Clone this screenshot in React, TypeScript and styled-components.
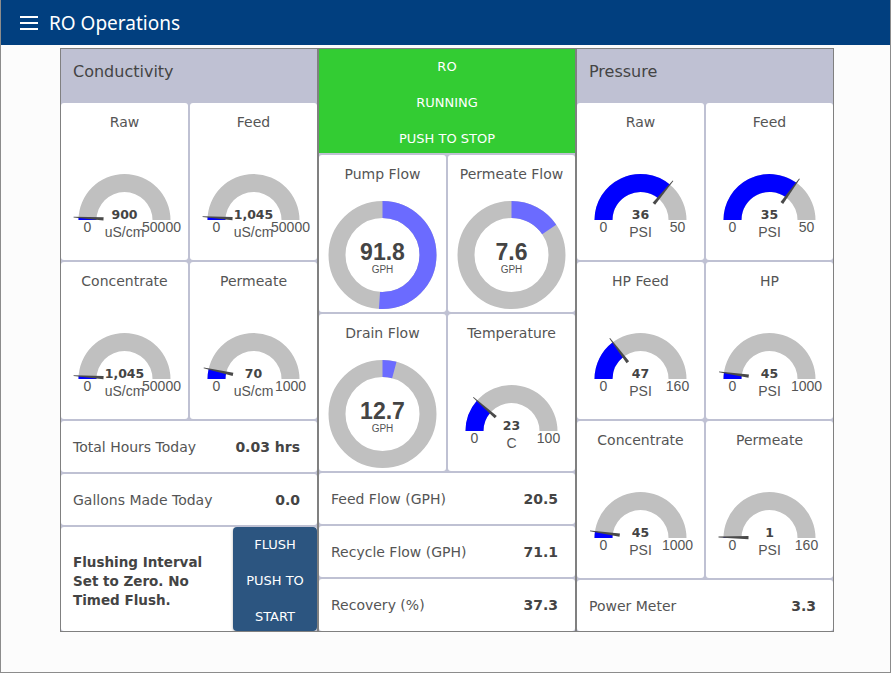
import styled, { createGlobalStyle } from 'styled-components';

const GlobalStyle = createGlobalStyle`
  html, body {
    margin: 0;
    padding: 0;
    background: #ffffff;
  }
  body {
    font-family: "DejaVu Sans", Verdana, sans-serif;
  }
  * {
    box-sizing: border-box;
  }
`;

interface GaugeData {
  title: string;
  value: number;
  display: string;
  unit: string;
  min: number;
  max: number;
}

interface DonutData {
  title: string;
  value: string;
  fraction: number;
}

interface StatData {
  label: string;
  value: string;
}

const conductivity: GaugeData[] = [
  { title: 'Raw', value: 900, display: '900', unit: 'uS/cm', min: 0, max: 50000 },
  { title: 'Feed', value: 1045, display: '1,045', unit: 'uS/cm', min: 0, max: 50000 },
  { title: 'Concentrate', value: 1045, display: '1,045', unit: 'uS/cm', min: 0, max: 50000 },
  { title: 'Permeate', value: 70, display: '70', unit: 'uS/cm', min: 0, max: 1000 },
];

const pressure: GaugeData[] = [
  { title: 'Raw', value: 36, display: '36', unit: 'PSI', min: 0, max: 50 },
  { title: 'Feed', value: 35, display: '35', unit: 'PSI', min: 0, max: 50 },
  { title: 'HP Feed', value: 47, display: '47', unit: 'PSI', min: 0, max: 160 },
  { title: 'HP', value: 45, display: '45', unit: 'PSI', min: 0, max: 1000 },
  { title: 'Concentrate', value: 45, display: '45', unit: 'PSI', min: 0, max: 1000 },
  { title: 'Permeate', value: 1, display: '1', unit: 'PSI', min: 0, max: 160 },
];

const temperature: GaugeData = {
  title: 'Temperature',
  value: 23,
  display: '23',
  unit: 'C',
  min: 0,
  max: 100,
};

const flows: DonutData[] = [
  { title: 'Pump Flow', value: '91.8', fraction: 0.51 },
  { title: 'Permeate Flow', value: '7.6', fraction: 0.155 },
  { title: 'Drain Flow', value: '12.7', fraction: 0.042 },
];

const leftStats: StatData[] = [
  { label: 'Total Hours Today', value: '0.03 hrs' },
  { label: 'Gallons Made Today', value: '0.0' },
];

const middleStats: StatData[] = [
  { label: 'Feed Flow (GPH)', value: '20.5' },
  { label: 'Recycle Flow (GPH)', value: '71.1' },
  { label: 'Recovery (%)', value: '37.3' },
];

const CX = 63.5;
const GAUGE_CY = 88;
const DONUT_CY = 71;
const R_OUT = 46;
const R_IN = 28;

const point = (angle: number, radius: number, cy: number) =>
  `${(CX + radius * Math.cos(angle)).toFixed(2)} ${(cy - radius * Math.sin(angle)).toFixed(2)}`;

const arcPath = (fraction: number) => {
  const end = Math.PI - Math.PI * fraction;
  return [
    `M ${point(Math.PI, R_OUT, GAUGE_CY)}`,
    `A ${R_OUT} ${R_OUT} 0 0 1 ${point(end, R_OUT, GAUGE_CY)}`,
    `L ${point(end, R_IN, GAUGE_CY)}`,
    `A ${R_IN} ${R_IN} 0 0 0 ${point(Math.PI, R_IN, GAUGE_CY)}`,
    'Z',
  ].join(' ');
};

const needlePoints = (fraction: number) => {
  const a = Math.PI - Math.PI * fraction;
  const dx = Math.cos(a);
  const dy = -Math.sin(a);
  const nx = Math.sin(a);
  const ny = Math.cos(a);
  const at = (r: number, w: number) =>
    `${(CX + dx * r + nx * w).toFixed(2)},${(GAUGE_CY + dy * r + ny * w).toFixed(2)}`;
  return [at(21, 1.6), at(51, 0.4), at(51, -0.4), at(21, -1.6)].join(' ');
};

const Gauge = ({ title, value, display, unit, min, max }: GaugeData) => {
  const fraction = Math.max(0, Math.min(1, (value - min) / (max - min)));

  return (
    <Cell>
      <CellTitle>{title}</CellTitle>
      <svg width={127} height={128} viewBox="0 0 127 128">
        <path d={arcPath(1)} fill="#c0c0c0" />
        <path d={arcPath(fraction)} fill="#0000ff" />
        <polygon points={needlePoints(fraction)} fill="#4a4a4a" />
        <GaugeValue x={CX} y={GAUGE_CY - 1}>
          {display}
        </GaugeValue>
        <GaugeUnit x={CX} y={GAUGE_CY + 16.5}>
          {unit}
        </GaugeUnit>
        <GaugeLabel x={CX - 37} y={GAUGE_CY + 12}>
          {min}
        </GaugeLabel>
        <GaugeLabel x={CX + 37} y={GAUGE_CY + 12}>
          {max}
        </GaugeLabel>
      </svg>
    </Cell>
  );
};

const Donut = ({ title, value, fraction }: DonutData) => {
  const r = 45.5;
  const circumference = 2 * Math.PI * r;

  return (
    <Cell>
      <CellTitle>{title}</CellTitle>
      <svg width={127} height={128} viewBox="0 0 127 128">
        <circle cx={CX} cy={DONUT_CY} r={r} fill="none" stroke="#c0c0c0" strokeWidth={17} />
        <circle
          cx={CX}
          cy={DONUT_CY}
          r={r}
          fill="none"
          stroke="#6b6bff"
          strokeWidth={17}
          strokeDasharray={`${circumference * fraction} ${circumference}`}
          transform={`rotate(-90 ${CX} ${DONUT_CY})`}
        />
        <DonutValue x={CX} y={DONUT_CY + 5}>
          {value}
        </DonutValue>
        <DonutUnit x={CX} y={DONUT_CY + 18}>
          GPH
        </DonutUnit>
      </svg>
    </Cell>
  );
};

const Stat = ({ label, value }: StatData) => (
  <StatRow>
    <StatLabel>{label}</StatLabel>
    <StatValue>{value}</StatValue>
  </StatRow>
);

const App = () => (
  <>
    <GlobalStyle />
    <Frame>
      <Header>
        <svg width={18} height={14} viewBox="0 0 18 14">
          <rect x={0} y={0} width={18} height={2} fill="#fff" />
          <rect x={0} y={6} width={18} height={2} fill="#fff" />
          <rect x={0} y={12} width={18} height={2} fill="#fff" />
        </svg>
        <Title>RO Operations</Title>
      </Header>
      <Main>
        <Column>
          <PanelHeader>Conductivity</PanelHeader>
          <CellGrid>
            {conductivity.map((g) => (
              <Gauge key={g.title} {...g} />
            ))}
          </CellGrid>
          {leftStats.map((s) => (
            <Stat key={s.label} {...s} />
          ))}
          <FlushRow>
            <FlushText>Flushing Interval Set to Zero. No Timed Flush.</FlushText>
            <FlushButton type="button">
              <span>FLUSH</span>
              <span>PUSH TO</span>
              <span>START</span>
            </FlushButton>
          </FlushRow>
        </Column>

        <Column>
          <RunButton type="button">
            <span>RO</span>
            <span>RUNNING</span>
            <span>PUSH TO STOP</span>
          </RunButton>
          <CellGrid>
            {flows.map((d) => (
              <Donut key={d.title} {...d} />
            ))}
            <Gauge {...temperature} />
          </CellGrid>
          {middleStats.map((s) => (
            <Stat key={s.label} {...s} />
          ))}
        </Column>

        <Column>
          <PanelHeader>Pressure</PanelHeader>
          <CellGrid>
            {pressure.map((g) => (
              <Gauge key={g.title} {...g} />
            ))}
          </CellGrid>
          <Stat label="Power Meter" value="3.3" />
        </Column>
      </Main>
    </Frame>
  </>
);

export default App;

const Frame = styled.div`
  width: 891px;
  height: 673px;
  overflow: hidden;

  background: #fcfcfc;
  border: 1px solid #8c8c8c;
  border-top: none;
`;

const Header = styled.header`
  display: flex;
  gap: 11px;
  align-items: center;

  height: 45px;
  padding-left: 19px;

  background: #013f7f;
`;

const Title = styled.h1`
  margin: 0;

  font-family: 'Noto Sans', 'Open Sans', sans-serif;
  font-size: 19px;
  font-weight: 400;
  color: #ffffff;
`;

const Main = styled.main`
  display: grid;
  grid-template-columns: repeat(3, 258px);

  padding: 3px 0 0 59px;
`;

const Column = styled.section`
  display: flex;
  flex-direction: column;
  gap: 2px;

  height: 584px;
  overflow: hidden;

  background: #bfc1d3;
  border: 1px solid #808080;

  & > :last-child {
    flex: 1;
    min-height: 0;
  }
`;

const PanelHeader = styled.h2`
  flex: 0 0 52px;

  margin: 0;
  padding: 12px 12px 0;

  font-size: 16px;
  font-weight: 400;
  line-height: 22px;
  color: #444444;
`;

const CellGrid = styled.div`
  display: grid;
  grid-template-columns: 1fr 1fr;
  grid-auto-rows: 157px;
  gap: 2px;
`;

const Cell = styled.div`
  display: flex;
  flex-direction: column;
  align-items: center;

  overflow: hidden;

  background: #ffffff;
  border-radius: 3px;
`;

const CellTitle = styled.div`
  padding-top: 9px;

  font-size: 14px;
  line-height: 20px;
  color: #555555;
  white-space: nowrap;
`;

const GaugeValue = styled.text`
  font-family: 'DejaVu Sans', sans-serif;
  font-size: 12.5px;
  font-weight: 700;
  fill: #444444;
  text-anchor: middle;
`;

const GaugeUnit = styled.text`
  font-family: 'Liberation Sans', Arial, sans-serif;
  font-size: 14px;
  fill: #555555;
  text-anchor: middle;
`;

const GaugeLabel = styled.text`
  font-family: 'Liberation Sans', Arial, sans-serif;
  font-size: 14px;
  fill: #555555;
  text-anchor: middle;
`;

const DonutValue = styled.text`
  font-family: 'Liberation Sans', Arial, sans-serif;
  font-size: 23px;
  font-weight: 700;
  fill: #444444;
  text-anchor: middle;
`;

const DonutUnit = styled.text`
  font-family: 'Liberation Sans', Arial, sans-serif;
  font-size: 10px;
  fill: #555555;
  text-anchor: middle;
`;

const StatRow = styled.div`
  display: flex;
  flex: 0 0 51px;
  align-items: center;
  justify-content: space-between;

  padding: 0 17px 0 12px;

  background: #ffffff;
  border-radius: 3px;
`;

const StatLabel = styled.span`
  font-size: 14px;
  color: #555555;
`;

const StatValue = styled.span`
  font-size: 14px;
  font-weight: 700;
  color: #444444;
`;

const FlushRow = styled.div`
  display: flex;
  overflow: hidden;

  background: #ffffff;
  border-radius: 3px;
`;

const FlushText = styled.p`
  flex: 1;
  align-self: center;

  margin: 0;
  padding: 4px 10px 0 12px;

  font-size: 13.5px;
  font-weight: 700;
  line-height: 19px;
  color: #444444;
`;

const buttonText = `
  display: flex;
  flex-direction: column;
  overflow: hidden;

  padding: 0;

  font-family: "DejaVu Sans", Verdana, sans-serif;
  font-size: 13px;
  line-height: 36px;
  color: #ffffff;
  text-align: center;

  border: none;
  cursor: pointer;
`;

const FlushButton = styled.button`
  ${buttonText}
  width: 84px;

  background: #2c5580;
  border-radius: 4px;
  box-shadow: 0 1px 3px rgba(0, 0, 0, 0.3);
`;

const RunButton = styled.button`
  ${buttonText}
  flex: 0 0 104px;

  background: #33cc33;
`;
